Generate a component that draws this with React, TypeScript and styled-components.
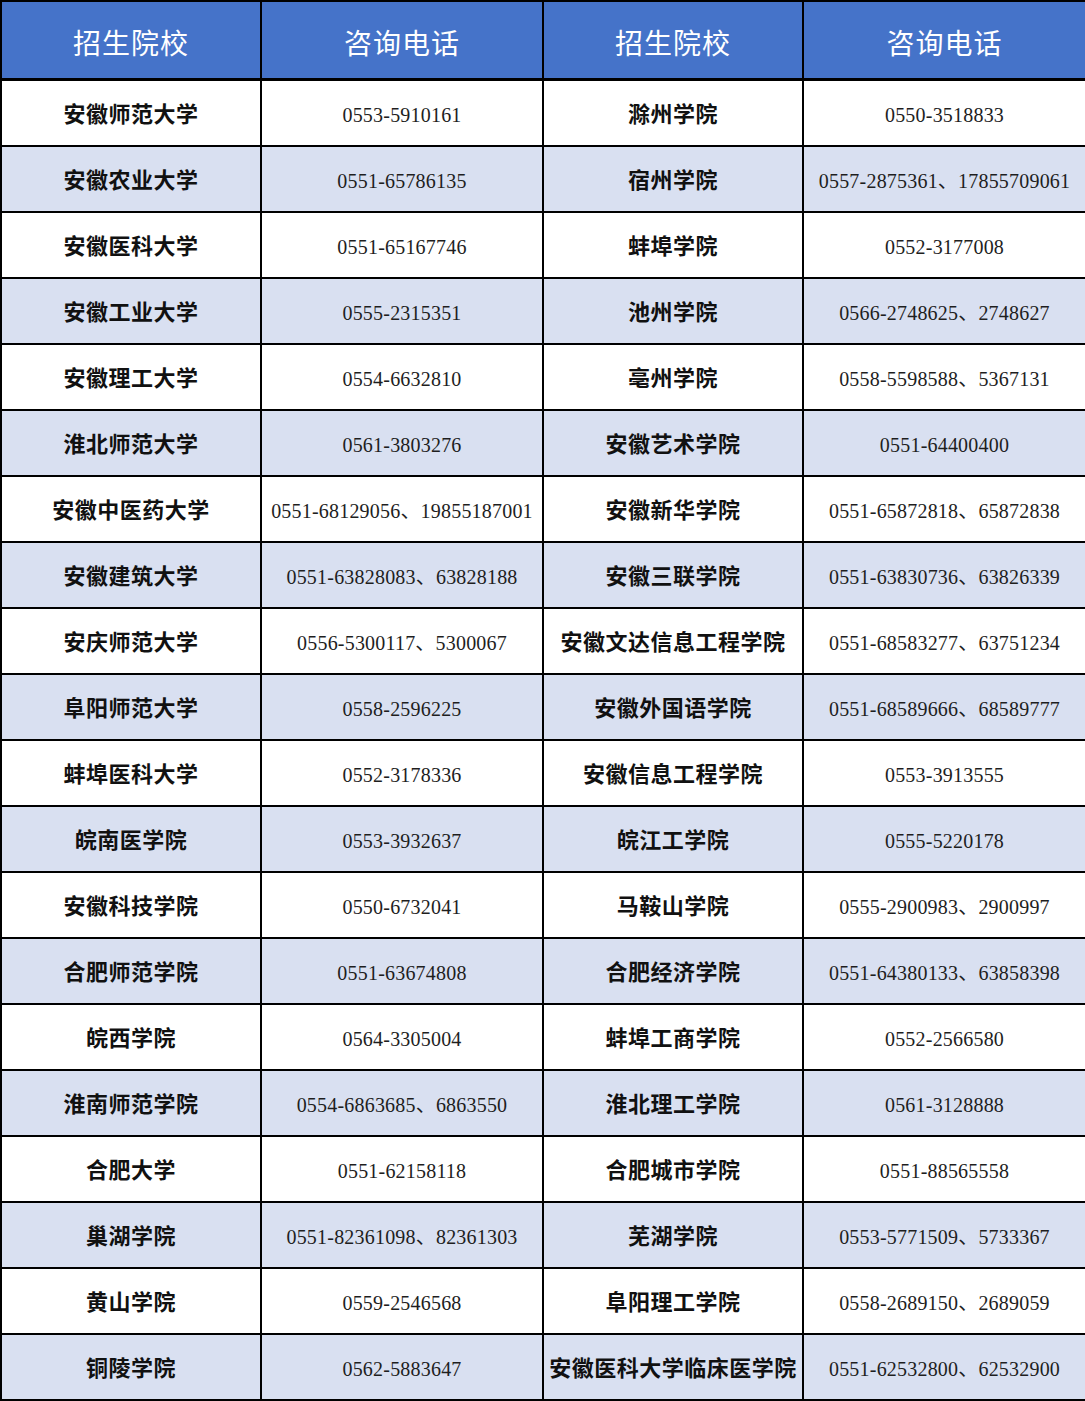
import React from "react";
import styled, { createGlobalStyle } from "styled-components";

type Row = [string, string, string, string];

const rows: Row[] = [
  ["安徽师范大学", "0553-5910161", "滁州学院", "0550-3518833"],
  ["安徽农业大学", "0551-65786135", "宿州学院", "0557-2875361、17855709061"],
  ["安徽医科大学", "0551-65167746", "蚌埠学院", "0552-3177008"],
  ["安徽工业大学", "0555-2315351", "池州学院", "0566-2748625、2748627"],
  ["安徽理工大学", "0554-6632810", "亳州学院", "0558-5598588、5367131"],
  ["淮北师范大学", "0561-3803276", "安徽艺术学院", "0551-64400400"],
  ["安徽中医药大学", "0551-68129056、19855187001", "安徽新华学院", "0551-65872818、65872838"],
  ["安徽建筑大学", "0551-63828083、63828188", "安徽三联学院", "0551-63830736、63826339"],
  ["安庆师范大学", "0556-5300117、5300067", "安徽文达信息工程学院", "0551-68583277、63751234"],
  ["阜阳师范大学", "0558-2596225", "安徽外国语学院", "0551-68589666、68589777"],
  ["蚌埠医科大学", "0552-3178336", "安徽信息工程学院", "0553-3913555"],
  ["皖南医学院", "0553-3932637", "皖江工学院", "0555-5220178"],
  ["安徽科技学院", "0550-6732041", "马鞍山学院", "0555-2900983、2900997"],
  ["合肥师范学院", "0551-63674808", "合肥经济学院", "0551-64380133、63858398"],
  ["皖西学院", "0564-3305004", "蚌埠工商学院", "0552-2566580"],
  ["淮南师范学院", "0554-6863685、6863550", "淮北理工学院", "0561-3128888"],
  ["合肥大学", "0551-62158118", "合肥城市学院", "0551-88565558"],
  ["巢湖学院", "0551-82361098、82361303", "芜湖学院", "0553-5771509、5733367"],
  ["黄山学院", "0559-2546568", "阜阳理工学院", "0558-2689150、2689059"],
  ["铜陵学院", "0562-5883647", "安徽医科大学临床医学院", "0551-62532800、62532900"],
];

const GlobalStyle = createGlobalStyle`
  html, body {
    margin: 0;
    padding: 0;
    background: #ffffff;
  }
`;

const Table = styled.table`
  width: 1085px;
  border-collapse: collapse;
  table-layout: fixed;
  border: 2px solid #000;
`;

const HeadCell = styled.th`
  height: 72px;
  padding: 4px 0 0;
  background: #4573c9;
  color: #ffffff;
  font-family: "Noto Sans CJK SC", sans-serif;
  font-size: 28px;
  font-weight: 400;
  letter-spacing: 1px;
  text-align: center;
  border-right: 2px solid #000;
  border-bottom: 3px solid #000;
  &:last-child {
    border-right: none;
  }
`;

const BodyRow = styled.tr<{ $shaded: boolean }>`
  height: 66px;
  background: ${(p) => (p.$shaded ? "#d9e0f1" : "#ffffff")};
`;

const Cell = styled.td<{ $kind: "name" | "phone" }>`
  padding: ${(p) => (p.$kind === "phone" ? "4px 0 0" : "0")};
  text-align: center;
  white-space: nowrap;
  color: ${(p) => (p.$kind === "name" ? "#111" : "#1e1e1e")};
  border: 2px solid #000;
  line-height: 1.3;
  font-family: ${(p) =>
    p.$kind === "name"
      ? `"Noto Sans CJK SC", sans-serif`
      : `"Liberation Serif", "Noto Sans CJK SC", serif`};
  font-size: ${(p) => (p.$kind === "name" ? "22px" : "20px")};
  font-weight: ${(p) => (p.$kind === "name" ? 700 : 400)};
  letter-spacing: ${(p) => (p.$kind === "name" ? "0.5px" : "0.2px")};
`;

export default function App() {
  return (
    <>
      <GlobalStyle />
      <Table>
        <colgroup>
          <col style={{ width: 260 }} />
          <col style={{ width: 282 }} />
          <col style={{ width: 260 }} />
          <col style={{ width: 283 }} />
        </colgroup>
        <thead>
          <tr>
            <HeadCell>招生院校</HeadCell>
            <HeadCell>咨询电话</HeadCell>
            <HeadCell>招生院校</HeadCell>
            <HeadCell>咨询电话</HeadCell>
          </tr>
        </thead>
        <tbody>
          {rows.map((r, i) => (
            <BodyRow key={i} $shaded={i % 2 === 1}>
              <Cell $kind="name">{r[0]}</Cell>
              <Cell $kind="phone">{r[1]}</Cell>
              <Cell $kind="name">{r[2]}</Cell>
              <Cell $kind="phone">{r[3]}</Cell>
            </BodyRow>
          ))}
        </tbody>
      </Table>
    </>
  );
}
